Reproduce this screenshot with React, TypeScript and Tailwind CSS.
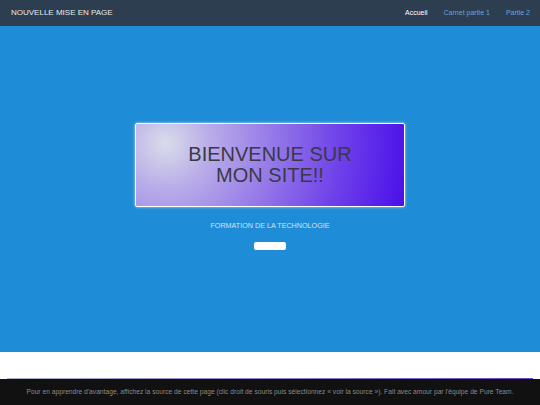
export default function App() {
  const font = { fontFamily: '"Liberation Sans", Arial, sans-serif' };
  return (
    <div className="min-h-screen bg-white" style={font}>
      {/* Navbar */}
      <nav className="flex h-[26px] items-center justify-between bg-[#2c3e50] pl-[11px] pr-[10px]">
        <span className="text-[8px] text-[#e8eaec]">NOUVELLE MISE EN PAGE</span>
        <div className="flex items-center gap-[16px] text-[7px]">
          <span className="text-white">Accueil</span>
          <span className="text-[#65a5da]">Carnet partie 1</span>
          <span className="text-[#65a5da]">Partie 2</span>
        </div>
      </nav>

      {/* Hero */}
      <section className="flex h-[326px] flex-col items-center bg-[#1e8cd6] pt-[97px]">
        <div className="flex h-[84px] w-[270px] items-center justify-center rounded-[2px] border-[1.5px] border-white bg-[radial-gradient(circle_farthest-corner_at_11%_24%,#d9dcea_0%,#b9ade8_18%,#9a80e8_40%,#7043e9_70%,#4a0fe9_100%)] shadow-[0_0_3px_rgba(255,255,255,0.7)]">
          <h1 className="text-center text-[20px] leading-[21px] text-[#3a3946]">
            BIENVENUE SUR
            <br />
            MON SITE!!
          </h1>
        </div>
        <p className="mt-[14px] text-[7.2px] text-[#cfe3f6]">FORMATION DE LA TECHNOLOGIE</p>
        <button className="mt-[10px] h-[8px] w-[32px] rounded-[2px] bg-white" />
      </section>

      {/* Content below */}
      <section className="px-[7px] pt-[26px]">
        <div className="h-[27px] bg-[linear-gradient(90deg,#aab3c9_0%,#8e86c8_50%,#6a49c4_100%)]" />
      </section>

      {/* Footer */}
      <footer className="fixed bottom-0 left-0 right-0 flex h-[26px] items-center justify-center bg-[#111111]">
        <p className="whitespace-nowrap text-[6.7px] text-[#8a8a8a]">
          Pour en apprendre d'avantage, affichez la source de cette page (clic droit de souris puis sélectionnez « voir la source »). Fait avec amour par l'équipe de Pure Team.
        </p>
      </footer>
    </div>
  );
}
